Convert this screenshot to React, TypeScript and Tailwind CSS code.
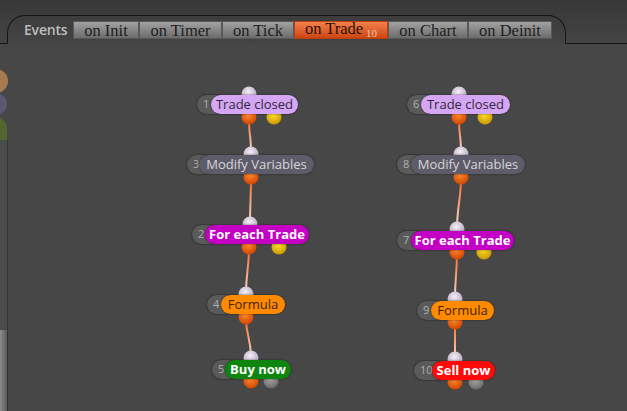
import React from "react";

type NodeDef = {
  n: string;
  label: string;
  bl: number;
  ll: number;
  top: number;
  w: number;
  cls: string;
};

const nodes: NodeDef[] = [
  { n: "1", label: "Trade closed", bl: 197, ll: 211, top: 95, w: 87, cls: "bg-[#d4a6f4] text-[#34283c]" },
  { n: "3", label: "Modify Variables", bl: 187, ll: 199, top: 155, w: 115, cls: "bg-[#5e5c6a] text-[#d6d6d6]" },
  { n: "2", label: "For each Trade", bl: 192, ll: 205, top: 225, w: 104, cls: "bg-[#c400c4] text-white font-bold" },
  { n: "4", label: "Formula", bl: 207, ll: 221, top: 295, w: 64, cls: "bg-[#ff8a00] text-[#3a2406]" },
  { n: "5", label: "Buy now", bl: 212, ll: 225, top: 360, w: 66, cls: "bg-[#0e850e] text-white font-bold" },
  { n: "6", label: "Trade closed", bl: 407, ll: 421, top: 95, w: 89, cls: "bg-[#d4a6f4] text-[#34283c]" },
  { n: "8", label: "Modify Variables", bl: 397, ll: 411, top: 155, w: 114, cls: "bg-[#5e5c6a] text-[#d6d6d6]" },
  { n: "7", label: "For each Trade", bl: 397, ll: 411, top: 231, w: 103, cls: "bg-[#c400c4] text-white font-bold" },
  { n: "9", label: "Formula", bl: 417, ll: 431, top: 301, w: 63, cls: "bg-[#ff8a00] text-[#3a2406]" },
  { n: "10", label: "Sell now", bl: 414, ll: 432, top: 361, w: 63, cls: "bg-[#ff0a0a] text-white font-bold" },
];

type Circ = { x: number; y: number; c: "lav" | "org" | "yel" | "gry" };

const circles: Circ[] = [
  { x: 249, y: 94, c: "lav" }, { x: 249, y: 117, c: "org" }, { x: 274, y: 117, c: "yel" },
  { x: 251, y: 154, c: "lav" }, { x: 251, y: 177, c: "org" },
  { x: 250, y: 224, c: "lav" }, { x: 249, y: 247, c: "org" }, { x: 279, y: 247, c: "yel" },
  { x: 246, y: 294, c: "lav" }, { x: 246, y: 317, c: "org" },
  { x: 251, y: 358, c: "lav" }, { x: 251, y: 381, c: "org" }, { x: 271, y: 381, c: "gry" },
  { x: 459, y: 94, c: "lav" }, { x: 459, y: 117, c: "org" }, { x: 485, y: 117, c: "yel" },
  { x: 461, y: 154, c: "lav" }, { x: 461, y: 177, c: "org" },
  { x: 457, y: 229, c: "lav" }, { x: 457, y: 252, c: "org" }, { x: 484, y: 252, c: "yel" },
  { x: 455, y: 299, c: "lav" }, { x: 455, y: 322, c: "org" },
  { x: 455, y: 359, c: "lav" }, { x: 455, y: 382, c: "org" }, { x: 476, y: 382, c: "gry" },
];

const edges: [number, number, number, number][] = [
  [249, 117, 251, 154],
  [251, 177, 250, 224],
  [249, 247, 246, 294],
  [246, 317, 251, 358],
  [459, 117, 461, 154],
  [461, 177, 457, 229],
  [457, 252, 455, 299],
  [455, 322, 455, 359],
];

const tabs = [
  { t: "on Init", w: 66 },
  { t: "on Timer", w: 83 },
  { t: "on Tick", w: 72 },
  { t: "on Trade", w: 94, active: true },
  { t: "on Chart", w: 80 },
  { t: "on Deinit", w: 84 },
];

export default function App() {
  return (
    <div className="relative w-[627px] h-[411px] overflow-hidden bg-[#474747]" style={{ fontFamily: '"Open Sans", "Noto Sans", sans-serif' }}>
      {/* header */}
      <div className="flex h-[44px] items-end bg-gradient-to-b from-[#383838] to-[#444444]">
        <div className="w-[7px] self-stretch border-b border-[#151515]" />
        <div className="h-[29px] w-[559px] rounded-t-[18px] border-x border-t border-[#151515]">
          <div className="flex items-start pl-[16px] pt-[5px]">
            <span className="w-[49px] text-[14px] font-semibold leading-[17px] tracking-[-0.2px] text-[#bdbdbd]">Events</span>
            <div className="flex">
              {tabs.map((tb) => (
                <div
                  key={tb.t}
                  style={{ width: tb.w }}
                  className={
                    "flex h-[18px] items-center justify-center border pt-[1px] text-[16.5px] leading-[16px] " +
                    (tb.active
                      ? "border-[#b84010] bg-gradient-to-b from-[#f4804a] to-[#cc4510] text-[#2a1206]"
                      : "border-[#585858] bg-gradient-to-b from-[#a2a2a2] to-[#6c6c6c] text-[#1e1e1e]")
                  }
                >
                  <span style={{ fontFamily: '"Liberation Serif", "DejaVu Serif", serif' }}>
                    {tb.t}
                    {tb.active && <span className="ml-[3px] align-[-3px] text-[11px] text-[#f2c8a8]">10</span>}
                  </span>
                </div>
              ))}
            </div>
          </div>
        </div>
        <div className="flex-1 self-stretch border-b border-[#151515]" />
      </div>

      {/* left edge strip */}
      <div className="absolute left-0 top-[140px] h-[271px] w-[8px] border-r border-[#333333] bg-[#4b4b4b]" />
      <div className="absolute left-0 top-[330px] h-[81px] w-[7px] bg-gradient-to-r from-[#8c8c8c] to-[#5c5c5c]" />

      {/* wires & sockets */}
      <svg className="absolute left-0 top-0" width="627" height="411" viewBox="0 0 627 411">
        <defs>
          <radialGradient id="gLav" cx="45%" cy="35%" r="65%">
            <stop offset="0%" stopColor="#f4eef6" />
            <stop offset="100%" stopColor="#b4a6be" />
          </radialGradient>
          <radialGradient id="gOrg" cx="45%" cy="35%" r="65%">
            <stop offset="0%" stopColor="#ff8a30" />
            <stop offset="100%" stopColor="#d04600" />
          </radialGradient>
          <radialGradient id="gYel" cx="45%" cy="35%" r="65%">
            <stop offset="0%" stopColor="#ffe030" />
            <stop offset="100%" stopColor="#c89800" />
          </radialGradient>
          <radialGradient id="gGry" cx="45%" cy="35%" r="65%">
            <stop offset="0%" stopColor="#a8a8a8" />
            <stop offset="100%" stopColor="#6a6a6a" />
          </radialGradient>
          {edges.map((e, i) => (
            <linearGradient key={i} id={"ge" + i} gradientUnits="userSpaceOnUse" x1={e[0]} y1={e[1]} x2={e[2]} y2={e[3]}>
              <stop offset="0%" stopColor="#f2641e" />
              <stop offset="100%" stopColor="#fadcd4" />
            </linearGradient>
          ))}
        </defs>
        <circle cx={-4} cy={81} r={12} fill="#a87a52" />
        <circle cx={-4} cy={104} r={11} fill="#5a586e" />
        <path d="M -4 117 A 11 11 0 0 1 7 128 L 7 140 L -4 140 Z" fill="#55652f" />
        {edges.map((e, i) => (
          <path
            key={i}
            d={`M ${e[0]} ${e[1]} C ${e[0]} ${e[1] + 22}, ${e[2]} ${e[3] - 22}, ${e[2]} ${e[3]}`}
            stroke={`url(#ge${i})`}
            strokeWidth={2}
            fill="none"
          />
        ))}
        {circles.map((c, i) => (
          <circle
            key={i}
            cx={c.x}
            cy={c.y}
            r={7.5}
            fill={c.c === "lav" ? "url(#gLav)" : c.c === "org" ? "url(#gOrg)" : c.c === "yel" ? "url(#gYel)" : "url(#gGry)"}
          />
        ))}
      </svg>

      {/* nodes */}
      {nodes.map((nd) => (
        <React.Fragment key={nd.n}>
          <div
            className="absolute flex h-[19px] items-center rounded-full bg-[#5a5a5a] pl-[6px] text-[11px] text-[#b0b0b0] shadow-[0_0_2px_rgba(0,0,0,0.7)]"
            style={{ left: nd.bl, top: nd.top, width: nd.ll - nd.bl + 14 }}
          >
            {nd.n}
          </div>
          <div
            className={"absolute flex h-[19px] items-center justify-center whitespace-nowrap rounded-full text-[13px] leading-[19px] shadow-[0_0_2px_rgba(0,0,0,0.6)] " + nd.cls}
            style={{ left: nd.ll, top: nd.top, width: nd.w }}
          >
            {nd.label}
          </div>
        </React.Fragment>
      ))}
    </div>
  );
}
